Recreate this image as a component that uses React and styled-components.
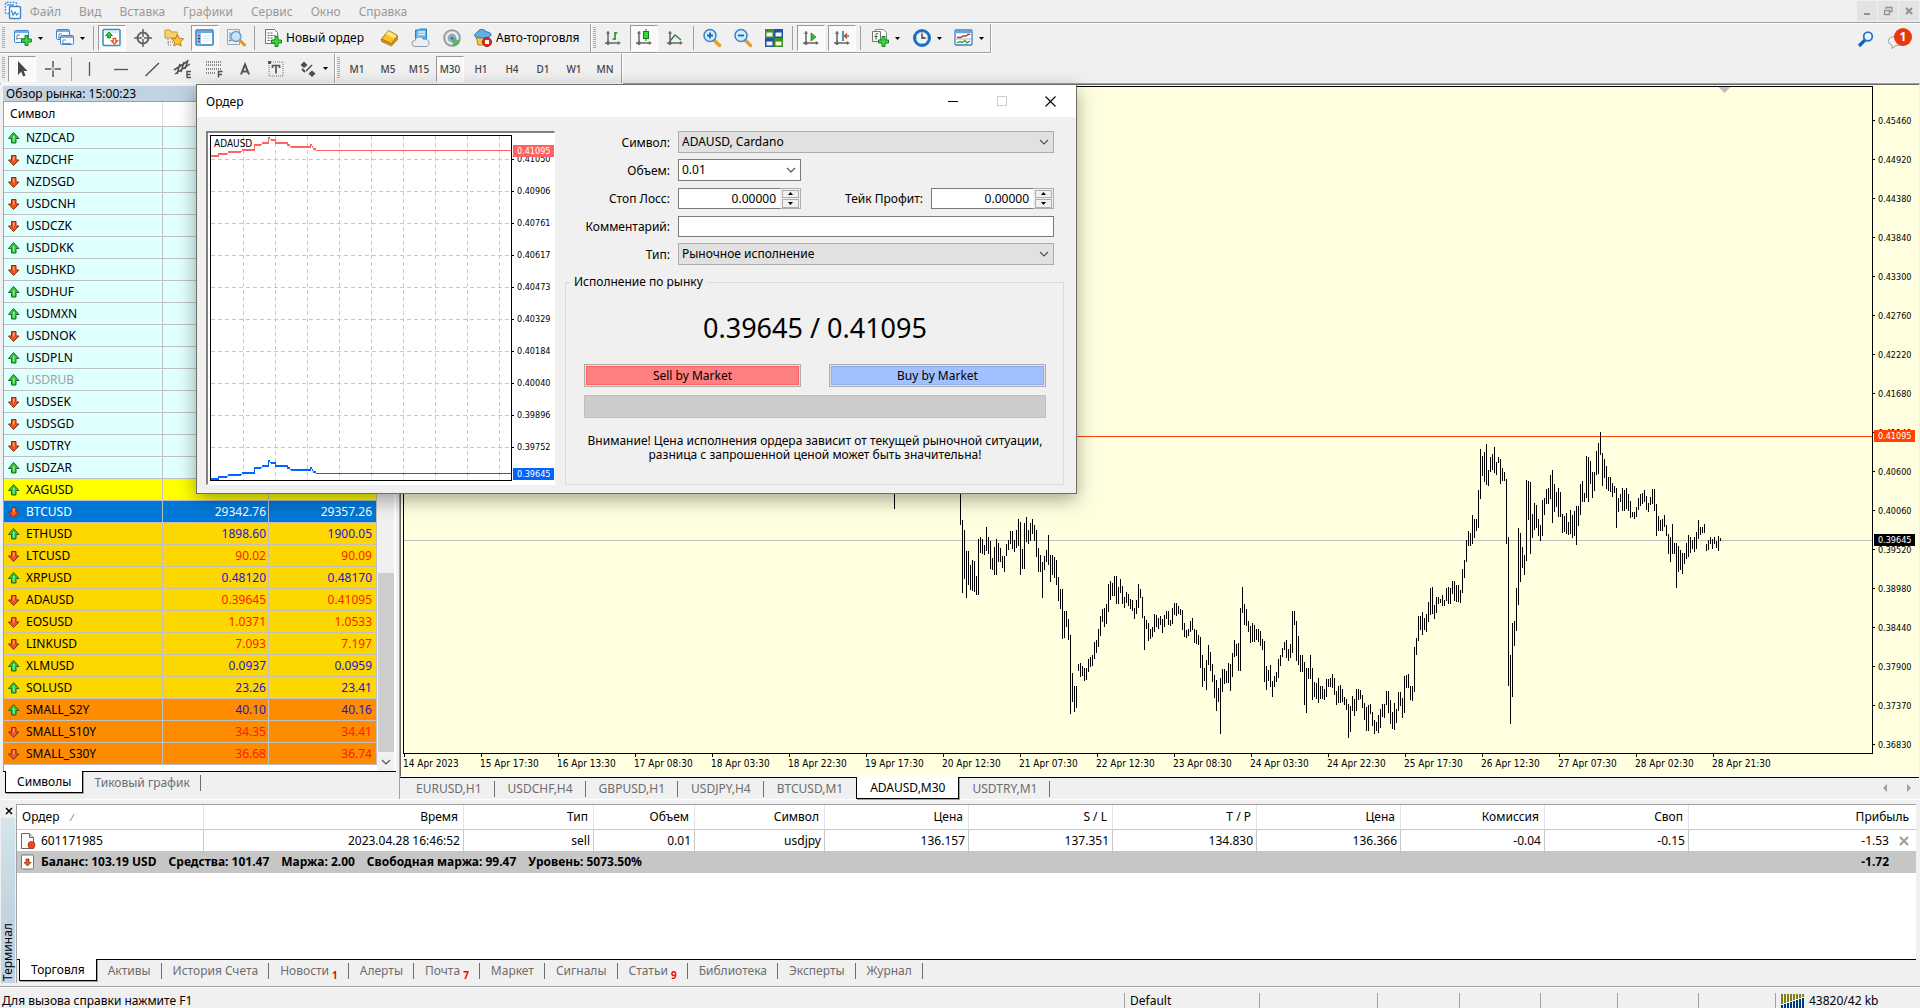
import React from "react";
import styled, { createGlobalStyle } from "styled-components";

const UI = '"Noto Sans", "Open Sans", sans-serif';
const CONDENSED = '"DejaVu Sans Condensed", "DejaVu Sans", sans-serif';
const FACE = "#f0f0f0";
const LINE = "#a0a0a0";
const PAPER = "#ffffe0";

const Global = createGlobalStyle`
  *, *::before, *::after { box-sizing: border-box; }
  body { margin: 0; background: ${FACE}; font-family: ${UI}; font-size: 12px; line-height: 16px; color: #000; }
  button, input, select { font: inherit; color: inherit; }
  button { background: none; border: 0; padding: 0; }
  svg { display: block; flex: none; }
`;

/* ---------- data ---------- */

const MENU = ["Файл", "Вид", "Вставка", "Графики", "Сервис", "Окно", "Справка"];
const PERIODS = ["M1", "M5", "M15", "M30", "H1", "H4", "D1", "W1", "MN"];

const CYAN = "#e0ffff";
const GOLD = "#ffd700";
const ORANGE = "#ff8c00";
const SYMBOLS = [
  ["NZDCAD", 1, CYAN], ["NZDCHF", 0, CYAN], ["NZDSGD", 0, CYAN], ["USDCNH", 0, CYAN],
  ["USDCZK", 0, CYAN], ["USDDKK", 1, CYAN], ["USDHKD", 0, CYAN], ["USDHUF", 1, CYAN],
  ["USDMXN", 1, CYAN], ["USDNOK", 0, CYAN], ["USDPLN", 1, CYAN], ["USDRUB", 1, CYAN],
  ["USDSEK", 0, CYAN], ["USDSGD", 0, CYAN], ["USDTRY", 0, CYAN], ["USDZAR", 1, CYAN],
  ["XAGUSD", 1, "#ffff00", "25.044", "25.082"],
  ["BTCUSD", 0, "#0078d7", "29342.76", "29357.26"],
  ["ETHUSD", 1, GOLD, "1898.60", "1900.05"],
  ["LTCUSD", 0, GOLD, "90.02", "90.09"],
  ["XRPUSD", 1, GOLD, "0.48120", "0.48170"],
  ["ADAUSD", 0, GOLD, "0.39645", "0.41095"],
  ["EOSUSD", 0, GOLD, "1.0371", "1.0533"],
  ["LINKUSD", 0, GOLD, "7.093", "7.197"],
  ["XLMUSD", 1, GOLD, "0.0937", "0.0959"],
  ["SOLUSD", 1, GOLD, "23.26", "23.41"],
  ["SMALL_S2Y", 1, ORANGE, "40.10", "40.16"],
  ["SMALL_S10Y", 0, ORANGE, "34.35", "34.41"],
  ["SMALL_S30Y", 0, ORANGE, "36.68", "36.74"],
];

const CHART_TABS = ["EURUSD,H1", "USDCHF,H4", "GBPUSD,H1", "USDJPY,H4", "BTCUSD,M1", "ADAUSD,M30", "USDTRY,M1"];
const TERMINAL_TABS = [
  ["Торговля"], ["Активы"], ["История Счета"], ["Новости", 1], ["Алерты"], ["Почта", 7],
  ["Маркет"], ["Сигналы"], ["Статьи", 9], ["Библиотека"], ["Эксперты"], ["Журнал"],
];
const PRICES = [
  "0.45460", "0.44920", "0.44380", "0.43840", "0.43300", "0.42760", "0.42220", "0.41680", "0.41140",
  "0.40600", "0.40060", "0.39520", "0.38980", "0.38440", "0.37900", "0.37370", "0.36830",
];
const TIMES = [
  "14 Apr 2023", "15 Apr 17:30", "16 Apr 13:30", "17 Apr 08:30", "18 Apr 03:30", "18 Apr 22:30",
  "19 Apr 17:30", "20 Apr 12:30", "21 Apr 07:30", "22 Apr 12:30", "23 Apr 08:30", "24 Apr 03:30",
  "24 Apr 22:30", "25 Apr 17:30", "26 Apr 12:30", "27 Apr 07:30", "28 Apr 02:30", "28 Apr 21:30",
];
const TICK_PRICES = [
  "0.41050", "0.40906", "0.40761", "0.40617", "0.40473", "0.40329", "0.40184", "0.40040", "0.39896", "0.39752",
];
const COLUMNS = [
  ["Ордер", 187], ["Время", 260], ["Тип", 130], ["Объем", 101], ["Символ", 130], ["Цена", 144],
  ["S / L", 144], ["T / P", 144], ["Цена", 144], ["Комиссия", 144], ["Своп", 144], ["Прибыль"],
];
const DEAL = ["601171985", "2023.04.28 16:46:52", "sell", "0.01", "usdjpy", "136.157", "137.351", "134.830", "136.366", "-0.04", "-0.15", "-1.53"];

/* High/low pairs, one bar every two pixels, in thirds of a pixel. */
const BARS_A = [
  210,315, 300,518, 330,477, 393,534, 393,494, 435,510, 420,512, 423,516, 468,524, 357,524, 351,398, 357,402,
  375,405, 321,393, 351,402, 363,447, 414,450, 381,464, 357,464, 369,426, 384,426, 408,444, 408,456, 372,408,
  360,390, 333,372, 333,387, 360,396, 330,384, 297,378, 306,464, 387,447, 309,447, 291,366, 330,372, 309,363,
  297,342, 315,363, 330,410, 384,456, 405,456, 426,534, 408,450, 390,426, 345,435, 405,486, 405,464, 411,474,
  420,494, 471,542, 507,567, 507,657, 573,654, 573,621, 597,660, 645,882, 759,846, 798,876, 798,864, 732,752,
  729,770, 738,768, 744,782, 744,780, 717,756, 711,741, 705,738, 666,717, 660,699, 627,681, 588,648, 567,606,
  564,621, 552,612, 492,576, 483,540, 489,528, 468,528, 468,552, 501,552, 477,519, 498,552, 531,564, 516,549,
  522,558, 537,567, 540,573, 564,597, 540,582, 492,564, 507,534, 531,594, 588,690, 600,627, 609,663, 627,657,
  621,651, 582,636, 585,621, 594,627, 588,615, 597,639, 585,621, 573,597, 573,615, 600,618, 564,612, 549,585,
  549,588, 558,582, 567,585, 570,630, 609,651, 630,654, 627,648, 603,636, 594,630, 627,669, 630,672, 645,675,
  651,744, 705,801, 744,783, 720,810, 675,735, 696,753, 732,786, 765,834, 780,873, 804,846, 774,942, 747,816,
  747,792, 753,788, 729,789, 732,813, 699,771, 660,711, 672,708, 669,753, 564,753, 501,579, 552,615, 567,618,
  603,636, 618,669, 609,666, 615,666, 627,660, 627,666, 633,678, 657,690, 663,786, 738,810, 750,783, 735,801,
  783,831, 768,801, 756,786, 717,774, 705,738, 684,711, 666,690, 660,714, 687,723, 672,714, 573,699, 573,615,
  603,723, 648,735, 705,756, 705,756, 726,855, 744,879, 744,777, 705,777, 744,840, 786,831, 789,837, 774,849,
  798,837, 798,837, 807,840, 777,831, 777,801, 774,801, 762,804, 774,825, 813,855, 798,849, 795,849, 807,846,
  831,855, 837,870, 852,954, 858,936, 828,873, 837,888, 807,873, 807,840, 810,837, 825,864, 849,900, 861,933,
  855,933, 852,882, 876,918, 900,942, 906,933, 885,939, 867,924, 852,891, 852,894, 813,855, 813,879, 840,912,
  876,927, 849,930, 867,909, 816,873, 816,858, 834,894, 768,879, 765,804, 762,804, 798,840, 798,843, 681,816,
  654,705, 588,663, 588,630, 576,645, 594,630, 582,636, 546,606, 504,585, 501,582, 555,597, 531,579, 531,552,
];
const BARS_B = [
  597,609, 585,618, 600,618, 564,603, 561,612, 564,612, 543,582, 543,603, 555,606, 555,606, 570,609, 507,579,
  480,534, 420,486, 393,438, 399,438, 345,432, 357,414, 357,393, 270,384, 147,297, 168,228, 156,246, 132,255,
  210,258, 171,216, 162,210, 141,219, 186,225, 171,189, 177,252, 204,243, 216,243, 237,432, 411,858, 765,972,
  669,891, 663,738, 564,693, 384,615, 399,546, 441,504, 465,525, 240,483, 243,360, 246,462, 342,414, 309,390,
  315,384, 357,408, 375,423, 300,408, 294,345, 267,312, 264,312, 225,297, 210,369, 252,336, 276,321, 264,351,
  276,351, 342,399, 348,396, 339,402, 366,405, 330,402, 345,414, 333,408, 318,435, 318,378, 252,345, 243,306,
  279,306, 168,294, 171,306, 183,252, 216,294, 216,273, 153,225, 129,222, 96,165, 159,258, 177,234, 198,267,
  231,273, 231,276, 249,291, 258,279, 264,384, 294,336, 282,306, 264,333, 270,333, 264,327, 282,333, 303,354,
  336,351, 336,357, 321,351, 294,330, 282,318, 279,312, 270,306, 288,330, 309,336, 291,315, 267,312, 267,333,
  312,408, 348,393, 360,393, 357,393, 345,381, 375,408, 402,462, 411,486, 372,462, 429,462, 429,564, 438,516,
  450,510, 459,522, 459,492, 429,477, 405,471, 411,459, 420,447, 411,456, 396,447, 360,417, 381,405, 381,399,
  372,399, 432,453, 420,450, 411,432, 417,447, 411,432, 423,444, 408,453, 414,423,
];
const barsPath = (list, x0, y0) => {
  let d = "";
  for (let i = 0; i < list.length; i += 2) {
    d += `M${x0 + i} ${y0 + Math.floor(list[i] / 3)}V${y0 + Math.ceil(list[i + 1] / 3)}`;
  }
  return d;
};

/* Tick chart: [length, level] runs; the quote flickers by a pixel or two inside a run. */
const RUNS = [[8, 19], [9, 17], [14, 15], [13, 13], [7, 8], [7, 6], [2, 1], [5, 3], [12, 6], [3, 8], [20, 10], [2, 8], [4, 12]];
const tickPath = (shift) => {
  const pts = [];
  let x = 0;
  RUNS.forEach(([n, y]) => {
    for (let i = 0; i < n; i += 1) {
      pts.push(`${x},${y + shift + (x % 2) * 2}`);
      x += 1;
    }
  });
  pts.push(`${x},${shift + 14}`, `300,${shift + 14}`);
  return pts.join(" ");
};

/* ---------- icons ---------- */

const Ico = ({ children, s = 20 }) => (
  <svg width={s} height={s} viewBox={`0 0 ${s} ${s}`} aria-hidden="true">{children}</svg>
);
const Plus = ({ x = 9, y = 9 }) => (
  <path transform={`translate(${x} ${y})`} d="M4 0.5h3v3.500h3.500v3h-3.500v3.500h-3v-3.500h-3.500v-3h3.500z" fill="#3fd63f" stroke="#12841a" strokeWidth="1" />
);
const Axes = () => (
  <g stroke="#666" strokeWidth="1.500" fill="#666">
    <path d="M5 4v13M2 15h14" fill="none" />
    <path d="M3.500 5.500L5 3l1.500 2.500zM15 13.500L17.500 15L15 16.500z" strokeWidth="0.500" />
    <circle cx="5" cy="15" r="1" />
  </g>
);
const Win = ({ x, y, w = 14, h = 12 }) => (
  <g transform={`translate(${x} ${y})`}>
    <rect x="0.500" y="0.500" width={w} height={h} rx="1" fill="#f4faff" stroke="#3d87c9" />
    <path d={`M1 2h${w - 1}`} stroke="#6cb0ea" strokeWidth="2" />
    <path d={`M3 5v5M2 8.500h${w - 4}M3 5h3`} stroke="#7a8fa3" fill="none" />
  </g>
);

const icons = {
  app: (
    <Ico>
      <rect x="1.500" y="1.500" width="11" height="11" rx="1" fill="#fff" stroke="#4a97de" strokeWidth="1.500" strokeDasharray="2 1" />
      <rect x="5.500" y="5.500" width="11" height="12" rx="1" fill="#fff" stroke="#3b8bd8" strokeWidth="1.500" />
      <path d="M7.500 9l1.500 5 2-3 1.500 3 2-2" fill="none" stroke="#3b8bd8" strokeWidth="1.200" />
      <path d="M3 4h7" stroke="#4a97de" strokeWidth="1.500" />
    </Ico>
  ),
  newChart: <Ico><Win x="1" y="2" /><Plus x={8} y={7} /></Ico>,
  profiles: <Ico><Win x="1" y="1" w={13} h={10} /><Win x="5" y="7" w={13} h={9} /></Ico>,
  market: (
    <Ico>
      <rect x="1" y="1.500" width="17" height="16" rx="1" fill="#fff" stroke="#2f8fc4" strokeWidth="1.500" />
      <path d="M3 4h13" stroke="#a9d4ee" strokeWidth="1" />
      <path d="M7 4l3.500 3.500h-2v2.500h-3V7.500h-2z" fill="#35c13c" stroke="#157d1c" strokeWidth="0.800" />
      <path d="M12.500 16l-3-3h1.700v-2.500h2.600V13h1.700z" fill="#fff" stroke="#e8571b" strokeWidth="1.300" />
    </Ico>
  ),
  cross: (
    <Ico>
      <circle cx="10" cy="10" r="5.500" fill="none" stroke="#606060" strokeWidth="2" />
      <path d="M10 1v8M10 11v8M1 10h8M11 10h8" stroke="#606060" strokeWidth="1.500" />
    </Ico>
  ),
  favorites: (
    <Ico>
      <path d="M1 2h5l1 2h6v6H1z" fill="#f7d26a" stroke="#c99b2c" />
      <path d="M4 11v6M4 14h5M4 17h3" stroke="#777" strokeDasharray="1 1" />
      <path d="M13.500 6.500l1.800 3.900 4.200.5-3.100 2.900.8 4.200-3.700-2-3.700 2 .8-4.200-3.100-2.900 4.200-.5z" fill="#fdc63a" stroke="#b97a14" />
    </Ico>
  ),
  navigator: (
    <Ico>
      <rect x="1" y="2" width="17" height="15" rx="1" fill="#fff" stroke="#2b79c2" strokeWidth="1.500" />
      <path d="M2 4h15" stroke="#2f8fe0" strokeWidth="1.500" />
      <path d="M2 5h4v11.500H2z" fill="#8cc0ee" />
      <path d="M3 7.500h2M3 13.500h2" stroke="#d23" strokeWidth="1.500" /><path d="M3 10.500h2" stroke="#333" strokeWidth="1.500" />
      <path d="M8 8h8M8 10.500h8M8 13h8" stroke="#d6e6f2" />
    </Ico>
  ),
  tester: (
    <Ico>
      <path d="M1.500 1.500h12v15h-12z" fill="#eef3f8" stroke="#9aa7b3" />
      <path d="M4 4v10M2.500 12.500h10M4 7l3-3" stroke="#8a97a5" fill="none" />
      <circle cx="10" cy="8.500" r="5" fill="#bfe1fb" fillOpacity="0.850" stroke="#6b9dc8" strokeWidth="1.300" />
      <path d="M14 12.500l4.500 4.500" stroke="#d99a1e" strokeWidth="3" strokeLinecap="round" />
    </Ico>
  ),
  order: (
    <Ico>
      <path d="M2.500 1.500h9l3 3v11h-12z" fill="#fafafa" stroke="#777" />
      <path d="M4.500 5h6M4.500 7.500h8M4.500 10h5M4.500 12.500h4" stroke="#666" strokeDasharray="2 1" />
      <Plus x={8} y={8} />
    </Ico>
  ),
  gold: (
    <Ico>
      <path d="M1.500 11L8.500 2.500l9 5-6 8.500z" fill="#f8c02c" stroke="#b47708" />
      <path d="M8.500 3l8.500 5-3 2.500-8-4.500z" fill="#fde38a" />
      <path d="M1.500 11l10 4.500 6-7.500v3.500l-6 6.500-10-4.500z" fill="#d8921a" stroke="#a76c08" strokeWidth="0.700" />
    </Ico>
  ),
  cloud: (
    <Ico>
      <path d="M4.500 2h3l1-1h7v10h-11z" fill="#5db4f2" stroke="#2b7fc4" />
      <path d="M7 4h7M7 6.500h7" stroke="#e2f3ff" strokeWidth="1.500" />
      <path d="M4 18.500a3 3 0 010-6 4.500 4.500 0 018.500-1 3.600 3.600 0 013.500 7z" fill="#e9eff5" stroke="#8e9db0" />
    </Ico>
  ),
  signal: (
    <Ico>
      <circle cx="10" cy="10" r="8" fill="#c4cacf" stroke="#8f989f" strokeWidth="1.500" />
      <circle cx="10" cy="10" r="5.500" fill="none" stroke="#eef1f4" strokeWidth="1.500" />
      <circle cx="10" cy="10" r="3.500" fill="#8fb8d2" stroke="#8f989f" />
      <path d="M10 10l1 8.500c4-.4 6.500-3 7-6z" fill="#49b14d" fillOpacity="0.850" />
      <circle cx="10" cy="10" r="1.500" fill="#2c6fa6" />
    </Ico>
  ),
  auto: (
    <Ico>
      <path d="M3 8l2 9h8l3-9z" fill="#f6c544" stroke="#b88413" />
      <path d="M1.500 7.500c0-2 2-2 3-3.500s2-3 5-2.500 3 2 5 2.500 3.500 1 3.500 3-4 3-8 3-8.500-.5-8.500-2.500z" fill="#61aee4" stroke="#2d74ad" />
      <circle cx="14" cy="14" r="4.500" fill="#e5291c" stroke="#a8160c" />
      <rect x="12" y="12" width="4" height="4" fill="#fff" />
    </Ico>
  ),
  bars: <Ico><Axes /><path d="M12 4v8M12 5h2.500M9.500 11H12" stroke="#2a9432" strokeWidth="1.700" fill="none" /></Ico>,
  candles: <Ico><Axes /><path d="M12 1v12" stroke="#157d1c" /><rect x="9.500" y="3.500" width="5" height="7" fill="#2fd83a" stroke="#157d1c" /></Ico>,
  line: <Ico><Axes /><path d="M5 13l5-6 6 5" stroke="#3b7a42" strokeWidth="1.400" fill="none" /></Ico>,
  zoomIn: (
    <Ico>
      <path d="M12 12l5.500 5.500" stroke="#dfa32a" strokeWidth="3.500" strokeLinecap="round" />
      <circle cx="8" cy="7.500" r="6" fill="#d4ecfd" stroke="#3b83c4" strokeWidth="1.500" />
      <path d="M8 4.500v6M5 7.500h6" stroke="#1f67ad" strokeWidth="1.800" />
    </Ico>
  ),
  zoomOut: (
    <Ico>
      <path d="M12 12l5.500 5.500" stroke="#dfa32a" strokeWidth="3.500" strokeLinecap="round" />
      <circle cx="8" cy="7.500" r="6" fill="#d4ecfd" stroke="#3b83c4" strokeWidth="1.500" />
      <path d="M5 7.500h6" stroke="#1f67ad" strokeWidth="1.800" />
    </Ico>
  ),
  tile: (
    <Ico>
      <path d="M1 1h9v9H1z" fill="#3f8f1f" /><path d="M10 1h9v9h-9z" fill="#1f52a8" />
      <path d="M1 10h9v9H1z" fill="#1f52a8" /><path d="M10 10h9v9h-9z" fill="#3f8f1f" />
      <path d="M2.500 4.500h6v4h-6zM11.500 4.500h6v4h-6zM2.500 13.500h6v4h-6zM11.500 13.500h6v4h-6z" fill="#eef7e8" />
    </Ico>
  ),
  scroll: <Ico><Axes /><path d="M10 5l5 4-5 4z" fill="#35b53d" stroke="#157d1c" strokeWidth="0.700" /></Ico>,
  shift: <Ico><Axes /><path d="M11 3v10" stroke="#1f67ad" strokeWidth="1.500" /><path d="M17 8h-4.500M15 5.500L12.500 8l2.500 2.500" stroke="#c0501a" strokeWidth="1.500" fill="none" /></Ico>,
  indicators: (
    <Ico>
      <path d="M5.500 1.500h8l3 3v9h-11z" fill="#fff" stroke="#888" />
      <path d="M2.500 3.500h8v10h-8z" fill="#f4f4f4" stroke="#777" />
      <path d="M8 5.500c-2-.5-2 1-2 2v4M4.500 8.500h3" stroke="#555" fill="none" />
      <Plus x={8} y={8} />
    </Ico>
  ),
  clock: (
    <Ico>
      <circle cx="10" cy="10" r="7.500" fill="#e9f4fd" stroke="#1f6fbf" strokeWidth="3" />
      <path d="M10 5.500V10h3.500" stroke="#333" strokeWidth="1.300" fill="none" />
      <path d="M10 4v1M10 15v1M4 10h1M15 10h1" stroke="#789" />
    </Ico>
  ),
  template: (
    <Ico>
      <rect x="1" y="2" width="17" height="15" rx="1" fill="#fff" stroke="#3f7fbf" strokeWidth="1.300" />
      <path d="M2 4h15" stroke="#5ea6e6" strokeWidth="2.500" />
      <path d="M3 9.500h4l2-1.500h3l2-1.500h2" stroke="#b03a10" strokeWidth="1.300" fill="none" />
      <path d="M2 11h15" stroke="#9cb6cc" />
      <path d="M3 15l3-1.500 2 1 3-2 2 2.500 3-2" stroke="#2c8e34" strokeWidth="1.300" fill="none" />
    </Ico>
  ),
  cursor: <Ico><path d="M6 2v14l3.200-3.200 2 4.700 2.400-1-2-4.600H15.500z" fill="#484848" /></Ico>,
  plusThin: <Ico><path d="M10 2v6.500M10 11.500V18M2 10h6.500M11.500 10H18" stroke="#555" strokeWidth="1.500" /><path d="M9.500 9.500h1v1h-1z" fill="#555" /></Ico>,
  vline: <Ico><path d="M9.500 3v14" stroke="#555" strokeWidth="1.300" /></Ico>,
  hline: <Ico><path d="M3 10.500h14" stroke="#555" strokeWidth="1.300" /></Ico>,
  trend: <Ico><path d="M3.500 17L17 4" stroke="#555" strokeWidth="1.500" /></Ico>,
  channel: (
    <Ico>
      <path d="M1 11L15 2M2 15L17 5M4 15l3-10M8 13l3-10M12 10l3-9" stroke="#505050" strokeWidth="1.500" />
      <path d="M18 12.500h-4v6h4M14 15.500h3.500" stroke="#505050" strokeWidth="1.400" fill="none" />
    </Ico>
  ),
  fibo: (
    <Ico>
      <path d="M2 3h16M2 6h16M2 10h16M2 14h10" stroke="#666" strokeDasharray="1 1" strokeWidth="1.300" />
      <path d="M14.500 18.500v-6h4M14.500 15.500h3.500" stroke="#505050" strokeWidth="1.400" fill="none" />
    </Ico>
  ),
  textA: <Ico><path d="M6 15.500L10 5.500l4 10M7.500 12.500h5" stroke="#555" strokeWidth="2" fill="none" /></Ico>,
  label: (
    <Ico>
      <rect x="3" y="3" width="14" height="14" fill="none" stroke="#777" strokeDasharray="1 1" />
      <path d="M2 2h3v3H2z" fill="#555" /><path d="M6 6.500h8M10 6v8.500M6.500 6v3M13.500 6v3" stroke="#555" strokeWidth="1.700" />
    </Ico>
  ),
  arrows: (
    <Ico>
      <path d="M6 2.500l3.500 3.500-3.500 3-3.500-3zM14 18l-3.500-3.500 3.500-3 3.500 3z" fill="#4d4d4d" />
      <path d="M8 12l6-6" stroke="#4d4d4d" strokeWidth="1.500" /><path d="M4 10l3 3" stroke="#4d4d4d" strokeWidth="2" />
    </Ico>
  ),
  search: (
    <Ico>
      <path d="M9 11l-6 6" stroke="#1b5fb0" strokeWidth="3.200" />
      <circle cx="12" cy="7.500" r="4.300" fill="#eaf6ff" stroke="#2d73c4" strokeWidth="1.800" />
    </Ico>
  ),
  up: (
    <Ico s={14}>
      <path d="M6.500 1.500L12 7.500H9v4.500H4.500V7.500H1.500z" fill="#37c13e" stroke="#1c6f22" /><path d="M6 5h1.500v5.500H6z" fill="#8df08f" />
    </Ico>
  ),
  down: (
    <Ico s={14}>
      <path d="M6.500 12.500L1.500 7H4.500V2.500h4.500V7h3z" fill="#f0561c" stroke="#8c2f10" /><path d="M6 3.500h1.500v4H6z" fill="#ffa27a" />
    </Ico>
  ),
  deal: (
    <Ico s={16}>
      <path d="M1.500 .5h8l4 4v11h-12z" fill="#fbfbfb" stroke="#666" /><path d="M9.500.5v4h4" fill="#ddd" stroke="#666" />
      <circle cx="11.500" cy="12" r="3.500" fill="#ea4a17" stroke="#a32c08" strokeWidth="0.700" />
    </Ico>
  ),
  balance: (
    <Ico s={16}>
      <rect x="1.500" y="1" width="12" height="14" rx="1" fill="#fff" stroke="#777" />
      <path d="M7.500 12L4 8.500h2V5h3v3.500h2z" fill="#f0561c" stroke="#8c2f10" strokeWidth="0.800" />
    </Ico>
  ),
  traffic: (
    <svg width="24" height="15" viewBox="0 0 24 15" aria-hidden="true" shapeRendering="crispEdges">
      {[0, 1, 2, 3, 4, 5, 6, 7].map((i) => (
        <g key={i}>
          <rect x={i * 3} y="0" width="2" height={10 - i} fill="#808018" />
          <rect x={i * 3} y={11 - i} width="2" height={4 + i} fill="#003c80" />
        </g>
      ))}
    </svg>
  ),
};

const Chevron = () => (
  <svg width="10" height="6" viewBox="0 0 10 6" aria-hidden="true"><path d="M1 1l4 4 4-4" fill="none" stroke="#555" strokeWidth="1.200" /></svg>
);
const Caret = () => (
  <svg width="5" height="3" viewBox="0 0 5 3" aria-hidden="true"><path d="M0 0h5L2.500 3z" fill="#000" /></svg>
);

/* ---------- frame ---------- */

const Shell = styled.div`
  position: relative;
  display: flex;
  flex-direction: column;
  min-width: 1100px;
  min-height: 100vh;
`;

const MenuBar = styled.nav`
  display: flex;
  align-items: center;
  height: 23px;
  margin-bottom: 1px;
  padding: 0 1px 0 4px;
  border-bottom: 1px solid ${LINE};
  box-shadow: 0 1px #fff;
`;
const MenuList = styled.div`
  display: flex;
  flex: 1;
  gap: 18px;
  padding: 2px 0 0 6px;
`;
const MenuItem = styled.button`
  color: #999;
`;
const MdiButton = styled.button`
  display: grid;
  place-items: center;
  width: 20px;
  height: 20px;
  margin-left: 1px;
  background: #e3e3e3;
`;

const ToolRow = styled.div`
  display: flex;
  height: 30px;
  border-bottom: ${(p) => (p.$ruled ? `1px solid ${LINE}` : "0")};
`;
const Band = styled.div`
  display: flex;
  align-items: center;
  gap: 3px;
  height: 29px;
  padding: 0 2px 0 8px;
  border-right: 1px solid ${LINE};
  border-bottom: ${(p) => (p.$ruled ? `1px solid ${LINE}` : "0")};
  background: repeating-linear-gradient(#aaa 0 1px, transparent 1px 2px) 2px 3px / 3px 22px no-repeat;
  box-shadow: 1px 1px #fff;
`;
const Tool = styled.button`
  display: flex;
  align-items: center;
  justify-content: center;
  gap: 4px;
  min-width: 28px;
  height: 26px;
  padding: 0;
  border: 1px solid transparent;
  border-color: ${(p) => (p.$on ? "#999 #fff #fff #999" : "transparent")};
  background: ${(p) => (p.$on ? "#f9f9f9" : "none")};
`;
const TextTool = styled(Tool)`
  justify-content: flex-start;
  gap: 3px;
  padding: 0 8px 0 3px;
`;
const DropTool = styled(Tool)`
  width: 39px;
  gap: 5px;
`;
const Period = styled(Tool)`
  font-size: 10px;
  font-weight: 500;
  color: #444;
`;
const Divider = styled.i`
  width: 1px;
  height: 24px;
  margin: 0 1px;
  background: ${LINE};
`;
const Extras = styled.div`
  display: flex;
  flex: 1;
  justify-content: flex-end;
  align-items: center;
  gap: 6px;
  padding-right: 6px;
`;
const Bubble = styled(Tool)`
  position: relative;
  width: 28px;
`;
const Count = styled.span`
  position: absolute;
  top: 1px;
  right: 1px;
  width: 18px;
  height: 18px;
  border-radius: 9px;
  background: #e8380d;
  color: #fff;
  font-weight: 700;
  line-height: 18px;
  text-align: center;
`;

const Workspace = styled.main`
  display: flex;
`;

/* ---------- tabs ---------- */

const TabBar = styled.div`
  display: flex;
  align-items: flex-start;
  height: ${(p) => p.$height};
  padding-left: ${(p) => p.$inset || "2px"};
  border-top: 1px solid #000;
`;
const Tab = styled.button`
  position: relative;
  display: flex;
  height: ${(p) => (p.$on ? "22px" : "21px")};
  margin-top: ${(p) => (p.$on ? "-1px" : "0")};
  padding: ${(p) => (p.$on ? "1px" : "0")} ${(p) => p.$pad || "11px"} 0;
  align-items: center;
  color: ${(p) => (p.$on ? "#000" : "#6d6d6d")};
  background: ${(p) => (p.$on ? "#fff" : "none")};
  border-style: solid;
  border-color: #000;
  border-width: ${(p) => (p.$on ? "0 1px 1px 1px" : "0")};
  box-shadow: ${(p) => (p.$on ? `1px 1px ${LINE}` : "none")};
  &::after {
    content: "";
    position: absolute;
    right: 0;
    top: 3px;
    width: 1px;
    height: 16px;
    background: ${(p) => (p.$on || p.$last ? "transparent" : "#6d6d6d")};
  }
`;
const TabCount = styled.sup`
  align-self: flex-end;
  margin-left: 3px;
  color: #f00;
  font-size: 10px;
  font-weight: 700;
  line-height: 12px;
`;

/* ---------- market watch ---------- */

const Market = styled.section`
  flex: none;
  width: 400px;
  padding: 2px 3px 0 3px;
  border-right: 1px solid ${LINE};
  border-bottom: 1px solid ${LINE};
`;
const PanelTitle = styled.h2`
  margin: 0;
  height: 15px;
  padding-left: 3px;
  background: #c3d2e0;
  font-size: 12px;
  font-weight: 400;
  line-height: 15px;
`;
const WatchFrame = styled.div`
  display: flex;
  padding-bottom: 6px;
  border-top: 1px solid ${LINE};
  border-left: 1px solid ${LINE};
  background: #fff;
`;
const WatchTable = styled.table`
  width: 373px;
  table-layout: fixed;
  border-collapse: separate;
  border-spacing: 0;
  th, td { padding: 0 2px 0 3px; border-right: 1px solid silver; border-bottom: 1px solid silver; }
  th { height: 25px; padding-left: 6px; font-weight: 400; text-align: left; border-right-color: #e0e0e0; }
  td { height: 22px; }
`;
const WatchRow = styled.tr`
  background: ${(p) => p.$fill};
  color: ${(p) => p.$ink};
  td:last-child { padding-right: 4px; }
`;
const SymbolCell = styled.div`
  display: flex;
  align-items: center;
  gap: 5px;
  color: ${(p) => p.$ink};
`;
const Quote = styled.td`
  text-align: right;
`;
const ScrollTrack = styled.div`
  display: flex;
  flex-direction: column;
  justify-content: flex-end;
  align-items: center;
  width: 17px;
  margin-bottom: -6px;
  background: ${FACE};
`;
const ScrollThumb = styled.div`
  width: 16px;
  height: 179px;
  background: #cdcdcd;
`;
const ScrollArrow = styled.button`
  display: grid;
  place-items: center;
  height: 19px;
`;

/* ---------- chart ---------- */

const ChartSide = styled.section`
  display: flex;
  flex: 1;
  flex-direction: column;
  min-width: 0;
  padding-right: 1px;
`;
const ChartWindow = styled.div`
  display: grid;
  flex: 1;
  grid-template-columns: 1fr 46px;
  grid-template-rows: 1fr 22px;
  padding: 1px 0 0 2px;
  border-top: 1px solid #696969;
  border-left: 1px solid #696969;
  border-bottom: 1px solid #fff;
  background: ${PAPER};
`;
const Plot = styled.div`
  min-width: 0;
  border: 1px solid #000;
  svg { width: 100%; height: 100%; }
`;
const PriceAxis = styled.div`
  position: relative;
  grid-row: 1 / 3;
  grid-column: 2;
  padding-top: 15px;
`;
const PriceMark = styled.div`
  display: flex;
  align-items: center;
  gap: 3px;
  height: ${(p) => p.$step};
  font-family: ${CONDENSED};
  font-size: 9px;
  &::before { content: ""; width: 2px; height: 1px; background: #000; }
`;
const PriceFlag = styled.div`
  position: absolute;
  left: 1px;
  top: ${(p) => p.$top};
  width: 41px;
  height: 12px;
  padding-left: 4px;
  background: ${(p) => p.$fill};
  color: #fff;
  font-family: ${CONDENSED};
  font-size: 9px;
  line-height: 12px;
`;
const TimeAxis = styled.div`
  display: flex;
  overflow: hidden;
`;
const TimeMark = styled.div`
  flex: 0 0 77px;
  height: 20px;
  font-family: ${CONDENSED};
  font-size: 10px;
  line-height: 14px;
  white-space: nowrap;
  &::before { content: ""; display: block; width: 1px; height: 3px; margin-left: 1px; background: #000; }
`;
const TabScroll = styled.div`
  display: flex;
  gap: 18px;
  margin-left: auto;
  padding: 6px 8px 0 0;
`;

/* ---------- terminal ---------- */

const Terminal = styled.section`
  display: flex;
  flex: 1;
  padding: 4px 4px 3px 0;
  border-top: 1px solid #fff;
  margin-top: -1px;
`;
const Strip = styled.div`
  display: flex;
  flex-direction: column;
  width: 16px;
  padding-left: 1px;
`;
const StripClose = styled.button`
  display: grid;
  place-items: center;
  height: 14px;
`;
const StripTitle = styled.h2`
  flex: 1;
  margin: 0;
  width: 14px;
  background: linear-gradient(to top, #d3e6ea, #c3d2e0 60%, #c0d4e4);
  writing-mode: vertical-rl;
  transform: rotate(180deg);
  padding-top: 2px;
  font-size: 12px;
  font-weight: 400;
  line-height: 14px;
`;
const Deals = styled.div`
  display: flex;
  flex: 1;
  flex-direction: column;
  min-width: 0;
  border-top: 1px solid ${LINE};
  border-left: 1px solid ${LINE};
`;
const DealsBody = styled.div`
  flex: 1;
  background: #fff;
`;
const DealsTable = styled.table`
  width: 100%;
  table-layout: fixed;
  border-collapse: separate;
  border-spacing: 0;
  th { height: 25px; padding: 0 5px; font-weight: 400; text-align: right; border-right: 1px solid #e4e4e4; border-bottom: 1px solid #c8c8c8; }
  td { height: 21px; padding: 0 3px; text-align: right; border-right: 1px solid #c8c8c8; }
  th:first-child { text-align: left; }
  tr > :last-child { border-right: 0; padding-right: 7px; }
`;
const Sort = styled.span`
  margin-left: 12px;
  font-size: 9px;
  color: #555;
`;
const WithIcon = styled.div`
  display: flex;
  align-items: center;
  gap: ${(p) => p.$gap || "5px"};
  justify-content: ${(p) => (p.$end ? "flex-end" : "flex-start")};
`;
const Summary = styled.tr`
  background: #c6c6c6;
  font-weight: 700;
  td { height: 22px; border: 0; }
  td:last-child { padding-right: 27px; }
`;
const Totals = styled.span`
  display: flex;
  gap: 12px;
  white-space: nowrap;
`;
const StatusBar = styled.footer`
  display: flex;
  align-items: center;
  height: 22px;
  padding: 7px 0 0 2px;
  border-top: 1px solid ${LINE};
  box-shadow: inset 0 1px #fff;
`;
const StatusCell = styled.div`
  display: flex;
  align-items: center;
  gap: 4px;
  flex: ${(p) => (p.$w ? `0 0 ${p.$w}` : "1")};
  height: 16px;
  padding-left: ${(p) => (p.$w ? "5px" : "0")};
  border-left: ${(p) => (p.$w ? `1px solid ${LINE}` : "0")};
  line-height: 16px;
`;

/* ---------- order dialog ---------- */

const Dialog = styled.form`
  position: absolute;
  left: 196px;
  top: 84px;
  width: 881px;
  border: 1px solid #6e6e64;
  background: ${FACE};
  box-shadow: 0 6px 18px rgba(0, 0, 0, 0.35);
`;
const TitleBar = styled.header`
  display: flex;
  align-items: center;
  height: 32px;
  background: #fff;
  padding: 0 1px 0 9px;
`;
const DialogTitle = styled.h1`
  flex: 1;
  margin: 0;
  padding-top: 2px;
  font-size: 12px;
  font-weight: 400;
`;
const WindowButton = styled.button`
  display: grid;
  place-items: center;
  width: 49px;
  height: 32px;
`;
const DialogBody = styled.div`
  display: grid;
  grid-template-columns: 349px 1fr;
  gap: 10px;
  padding: 14px 12px 8px 9px;
`;
const TickFrame = styled.div`
  display: grid;
  grid-template-columns: 302px 1fr;
  align-items: start;
  padding: 2px 0 3px 2px;
  border: 1px solid #fff;
  border-top: 2px solid #808080;
  border-left: 2px solid #808080;
  background: #fff;
`;
const TickPlot = styled.div`
  position: relative;
  height: 346px;
  border: 1px solid #000;
`;
const TickName = styled.span`
  position: absolute;
  left: 3px;
  top: 1px;
  font-family: ${CONDENSED};
  font-size: 10px;
  line-height: 14px;
`;
const TickAxis = styled.div`
  position: relative;
  padding-top: 8px;
`;
const Fields = styled.div`
  display: grid;
  grid-template-columns: 105px 123px 1fr 123px;
  grid-auto-rows: 22px;
  row-gap: 6px;
  column-gap: 8px;
  align-items: center;
  padding-right: 10px;
`;
const Label = styled.label`
  padding-top: 2px;
  text-align: right;
`;
const Picker = styled.div`
  position: relative;
  grid-column: ${(p) => (p.$full ? "2 / -1" : "auto")};
  svg { position: absolute; right: 5px; top: 8px; pointer-events: none; }
`;
const Select = styled.select`
  appearance: none;
  width: 100%;
  height: 22px;
  padding: 0 3px;
  border: 1px solid ${(p) => (p.$plain ? "#7a7a7a" : "#adadad")};
  border-radius: 0;
  background: ${(p) => (p.$plain ? "#fff" : "#e1e1e1")};
`;
const Entry = styled.input`
  grid-column: 2 / -1;
  min-width: 0;
  width: 100%;
  height: 21px;
  padding: 0 4px;
  border: 1px solid #7a7a7a;
  border-radius: 0;
  background: #fff;
`;
const Spinner = styled.div`
  display: grid;
  grid-template-columns: 1fr 19px;
  height: 21px;
  border: 1px solid #adadad;
  input { grid-column: 1; height: 21px; margin: -1px 0 0 -1px; border-right: 0; text-align: right; }
`;
const SpinButtons = styled.div`
  display: grid;
  grid-template-rows: 1fr 1fr;
  gap: 1px;
  padding: 1px;
`;
const Spin = styled.button`
  display: grid;
  place-items: center;
  border: 1px solid #adadad;
  background: ${FACE};
  svg { transform: ${(p) => (p.$up ? "rotate(180deg)" : "none")}; }
`;
const Execution = styled.fieldset`
  min-width: 0;
  margin: 8px 0 0;
  padding: 0 17px 22px 18px;
  border: 1px solid #dcdcdc;
  legend { margin-left: -13px; padding: 0 3px; line-height: 18px; }
`;
const BigPrice = styled.p`
  margin: 19px 0 18px;
  font-size: 27px;
  line-height: 36px;
  text-align: center;
`;
const Deal = styled.div`
  display: grid;
  grid-template-columns: 1fr 1fr;
  gap: 8px 28px;
`;
const DealButton = styled.button`
  height: 23px;
  border: 1px solid #adadad;
  background: ${(p) => p.$fill};
  box-shadow: inset 0 0 0 1px #e1e1e1, inset 0 0 0 2px ${(p) => p.$rim};
`;
const Gauge = styled.div`
  grid-column: 1 / -1;
  height: 23px;
  border: 1px solid #bfbfbf;
  background: #ccc;
`;
const Warning = styled.p`
  margin: 16px 0 0;
  line-height: 14px;
  text-align: center;
  white-space: nowrap;
`;
const Right = styled.div`
  min-width: 0;
`;

/* ---------- sections ---------- */

function Drop({ icon, label }) {
  return <DropTool type="button" aria-label={label}>{icon}<Caret /></DropTool>;
}

function Toolbars() {
  return (
    <>
      <ToolRow>
        <Band $ruled>
          <Drop icon={icons.newChart} label="Новый график" />
          <Drop icon={icons.profiles} label="Профили" />
          <Divider />
          <Tool type="button" $on aria-label="Обзор рынка">{icons.market}</Tool>
          <Tool type="button" aria-label="Окно данных">{icons.cross}</Tool>
          <Tool type="button" aria-label="Навигатор">{icons.favorites}</Tool>
          <Tool type="button" $on aria-label="Терминал">{icons.navigator}</Tool>
          <Tool type="button" aria-label="Тестер">{icons.tester}</Tool>
          <Divider />
          <TextTool type="button">{icons.order}Новый ордер</TextTool>
          <Tool type="button" aria-label="Редактор">{icons.gold}</Tool>
          <Tool type="button" aria-label="Хостинг">{icons.cloud}</Tool>
          <Tool type="button" aria-label="Сигналы">{icons.signal}</Tool>
          <TextTool type="button">{icons.auto}Авто-торговля</TextTool>
        </Band>
        <Band $ruled>
          <Tool type="button" aria-label="Бары">{icons.bars}</Tool>
          <Tool type="button" $on aria-label="Свечи">{icons.candles}</Tool>
          <Tool type="button" aria-label="Линия">{icons.line}</Tool>
          <Divider />
          <Tool type="button" aria-label="Увеличить">{icons.zoomIn}</Tool>
          <Tool type="button" aria-label="Уменьшить">{icons.zoomOut}</Tool>
          <Tool type="button" aria-label="Мозаика">{icons.tile}</Tool>
          <Divider />
          <Tool type="button" $on aria-label="Автопрокрутка">{icons.scroll}</Tool>
          <Tool type="button" $on aria-label="Сдвиг">{icons.shift}</Tool>
          <Divider />
          <Drop icon={icons.indicators} label="Индикаторы" />
          <Drop icon={icons.clock} label="Периоды" />
          <Drop icon={icons.template} label="Шаблоны" />
        </Band>
        <Extras>
          <Tool type="button" aria-label="Поиск">{icons.search}</Tool>
          <Bubble type="button" aria-label="Сообщения">
            <svg width="26" height="22" viewBox="0 0 26 22" aria-hidden="true">
              <path d="M8 8.500c-5 0-7 2.500-6.500 5s2 3 3.500 3.500v3.500l4-3c6 0 8-2 8-4.500s-3-4.500-9-4.500z" fill="#f2f2f2" stroke="#9a9a9a" />
            </svg>
            <Count>1</Count>
          </Bubble>
        </Extras>
      </ToolRow>
      <ToolRow $ruled>
        <Band>
          <Tool type="button" $on aria-label="Курсор">{icons.cursor}</Tool>
          <Tool type="button" aria-label="Перекрестие">{icons.plusThin}</Tool>
          <Divider />
          <Tool type="button" aria-label="Вертикальная линия">{icons.vline}</Tool>
          <Tool type="button" aria-label="Горизонтальная линия">{icons.hline}</Tool>
          <Tool type="button" aria-label="Трендовая линия">{icons.trend}</Tool>
          <Tool type="button" aria-label="Канал">{icons.channel}</Tool>
          <Tool type="button" aria-label="Фибоначчи">{icons.fibo}</Tool>
          <Tool type="button" aria-label="Текст">{icons.textA}</Tool>
          <Tool type="button" aria-label="Метка">{icons.label}</Tool>
          <Drop icon={icons.arrows} label="Стрелки" />
        </Band>
        <Band>
          {PERIODS.map((p) => <Period type="button" key={p} $on={p === "M30"}>{p}</Period>)}
        </Band>
      </ToolRow>
    </>
  );
}

function MarketWatch() {
  return (
    <Market>
      <PanelTitle>Обзор рынка: 15:00:23</PanelTitle>
      <WatchFrame>
        <WatchTable>
          <colgroup><col width="159" /><col width="106" /><col /></colgroup>
          <thead><tr><th>Символ</th><th /><th /></tr></thead>
          <tbody>
            {SYMBOLS.map(([name, up, fill, bid, ask]) => {
              const picked = name === "BTCUSD";
              const ink = picked ? "#fff" : up ? "#1f10d8" : "#ff1a00";
              return (
                <WatchRow key={name} $fill={fill} $ink={ink}>
                  <td>
                    <SymbolCell $ink={picked ? "#fff" : name === "USDRUB" ? "#a0a0a0" : "#000"}>
                      {up ? icons.up : icons.down}{name}
                    </SymbolCell>
                  </td>
                  <Quote>{bid}</Quote>
                  <Quote>{ask}</Quote>
                </WatchRow>
              );
            })}
          </tbody>
        </WatchTable>
        <ScrollTrack>
          <ScrollThumb />
          <ScrollArrow type="button" aria-label="Вниз"><Chevron /></ScrollArrow>
        </ScrollTrack>
      </WatchFrame>
      <TabBar $height="28px">
        <Tab type="button" $on>Символы</Tab>
        <Tab type="button">Тиковый график</Tab>
      </TabBar>
    </Market>
  );
}

function Chart() {
  return (
    <ChartSide>
      <ChartWindow>
        <Plot>
          <svg aria-hidden="true" shapeRendering="crispEdges">
            <line x1="0" x2="100%" y1="453.500" y2="453.500" stroke="#c0c0c0" />
            <line x1="0" x2="100%" y1="349.500" y2="349.500" stroke="#ff4500" />
            <path d="M1314 0h12l-6 6z" fill="#c0c0c0" />
            <path
              d={barsPath(BARS_A, 556.5, 333) + barsPath(BARS_B, 1036.5, 313) + "M430.500 400V407M490.500 400V422"}
              stroke="#000"
              fill="none"
            />
          </svg>
        </Plot>
        <PriceAxis>
          {PRICES.map((p) => <PriceMark key={p} $step="39px">{p}</PriceMark>)}
          <PriceFlag $top="344px" $fill="#ff4500">0.41095</PriceFlag>
          <PriceFlag $top="448px" $fill="#000">0.39645</PriceFlag>
        </PriceAxis>
        <TimeAxis>{TIMES.map((t) => <TimeMark key={t}>{t}</TimeMark>)}</TimeAxis>
      </ChartWindow>
      <TabBar $height="23px" $inset="3px">
        {CHART_TABS.map((t) => (
          <Tab type="button" key={t} $pad="13px" $on={t === "ADAUSD,M30"} $last={t === "BTCUSD,M1"}>{t}</Tab>
        ))}
        <TabScroll>
          <svg width="5" height="8" viewBox="0 0 5 8" aria-hidden="true"><path d="M4 0v8L0 4z" fill="#a0a0a0" /></svg>
          <svg width="5" height="8" viewBox="0 0 5 8" aria-hidden="true"><path d="M1 0v8l4-4z" fill="#a0a0a0" /></svg>
        </TabScroll>
      </TabBar>
    </ChartSide>
  );
}

function TerminalPanel() {
  return (
    <Terminal>
      <Strip>
        <StripClose type="button" aria-label="Закрыть терминал">
          <svg width="8" height="8" viewBox="0 0 8 8" aria-hidden="true"><path d="M1 1l6 6M7 1L1 7" stroke="#000" strokeWidth="1.500" /></svg>
        </StripClose>
        <StripTitle>Терминал</StripTitle>
      </Strip>
      <Deals>
        <DealsBody>
          <DealsTable>
            <colgroup>{COLUMNS.map(([n, w], i) => <col key={i} width={w} />)}</colgroup>
            <thead>
              <tr>{COLUMNS.map(([n], i) => <th key={i}>{n}{i === 0 && <Sort>⁄</Sort>}</th>)}</tr>
            </thead>
            <tbody>
              <tr>
                {DEAL.map((v, i) => (
                  <td key={i}>
                    {i === 0 && <WithIcon>{icons.deal}{v}</WithIcon>}
                    {i === 11 && (
                      <WithIcon $end $gap="10px">
                        {v}
                        <svg width="10" height="10" viewBox="0 0 10 10" aria-hidden="true"><path d="M1 1l8 8M9 1L1 9" stroke="#999" strokeWidth="2" /></svg>
                      </WithIcon>
                    )}
                    {i > 0 && i < 11 && v}
                  </td>
                ))}
              </tr>
              <Summary>
                <td colSpan={11}>
                  <WithIcon>
                    {icons.balance}
                    <Totals>
                      <span>Баланс: 103.19 USD</span>
                      <span>Средства: 101.47</span>
                      <span>Маржа: 2.00</span>
                      <span>Свободная маржа: 99.47</span>
                      <span>Уровень: 5073.50%</span>
                    </Totals>
                  </WithIcon>
                </td>
                <td>-1.72</td>
              </Summary>
            </tbody>
          </DealsTable>
        </DealsBody>
        <TabBar $height="24px" $inset="2px">
          {TERMINAL_TABS.map(([t, n]) => (
            <Tab type="button" key={t} $on={t === "Торговля"}>{t}{n && <TabCount>{n}</TabCount>}</Tab>
          ))}
        </TabBar>
      </Deals>
    </Terminal>
  );
}

function OrderDialog() {
  return (
    <Dialog>
      <TitleBar>
        <DialogTitle>Ордер</DialogTitle>
        <WindowButton type="button" aria-label="Свернуть">
          <svg width="10" height="10" viewBox="0 0 10 10" aria-hidden="true"><path d="M0 5.500h10" stroke="#000" /></svg>
        </WindowButton>
        <WindowButton type="button" aria-label="Развернуть">
          <svg width="10" height="10" viewBox="0 0 10 10" aria-hidden="true"><rect x="0.500" y="0.500" width="9" height="9" fill="none" stroke="#ccc" /></svg>
        </WindowButton>
        <WindowButton type="button" aria-label="Закрыть">
          <svg width="11" height="11" viewBox="0 0 11 11" aria-hidden="true"><path d="M.5.5l10 10M10.500.5l-10 10" stroke="#000" strokeWidth="1.100" /></svg>
        </WindowButton>
      </TitleBar>
      <DialogBody>
        <TickFrame>
          <TickPlot>
            <svg width="300" height="344" shapeRendering="crispEdges" aria-hidden="true">
              <g stroke="#c8c8c8" strokeDasharray="4 3">
                {[0, 1, 2, 3, 4, 5, 6, 7, 8].map((i) => <path key={i} d={`M${32.5 + i * 32} 0V344`} />)}
                {[0, 1, 2, 3, 4, 5, 6, 7, 8, 9].map((i) => <path key={i} d={`M0 ${23.5 + i * 32}H300`} />)}
              </g>
              <polyline points={tickPath(0)} fill="none" stroke="#ff6464" />
              <polyline points={tickPath(323)} fill="none" stroke="#0064ff" />
            </svg>
            <TickName>ADAUSD</TickName>
          </TickPlot>
          <TickAxis>
            {TICK_PRICES.map((p) => <PriceMark key={p} $step="32px">{p}</PriceMark>)}
            <PriceFlag $top="10px" $fill="#ff6464">0.41095</PriceFlag>
            <PriceFlag $top="333px" $fill="#0064ff">0.39645</PriceFlag>
          </TickAxis>
        </TickFrame>
        <Right>
          <Fields>
            <Label htmlFor="symbol">Символ:</Label>
            <Picker $full>
              <Select id="symbol" defaultValue="a"><option value="a">ADAUSD, Cardano</option></Select>
              <Chevron />
            </Picker>
            <Label htmlFor="volume">Объем:</Label>
            <Picker>
              <Select id="volume" $plain defaultValue="a"><option value="a">0.01</option></Select>
              <Chevron />
            </Picker>
            <i /><i />
            <Label htmlFor="stop">Стоп Лосс:</Label>
            <Spinner>
              <Entry id="stop" defaultValue="0.00000" />
              <SpinButtons>
                <Spin type="button" $up aria-label="Увеличить"><Caret /></Spin>
                <Spin type="button" aria-label="Уменьшить"><Caret /></Spin>
              </SpinButtons>
            </Spinner>
            <Label htmlFor="take">Тейк Профит:</Label>
            <Spinner>
              <Entry id="take" defaultValue="0.00000" />
              <SpinButtons>
                <Spin type="button" $up aria-label="Увеличить"><Caret /></Spin>
                <Spin type="button" aria-label="Уменьшить"><Caret /></Spin>
              </SpinButtons>
            </Spinner>
            <Label htmlFor="note">Комментарий:</Label>
            <Entry id="note" />
            <Label htmlFor="kind">Тип:</Label>
            <Picker $full>
              <Select id="kind" defaultValue="a"><option value="a">Рыночное исполнение</option></Select>
              <Chevron />
            </Picker>
          </Fields>
          <Execution>
            <legend>Исполнение по рынку</legend>
            <BigPrice>0.39645 / 0.41095</BigPrice>
            <Deal>
              <DealButton type="button" $fill="#ff8080" $rim="#ff6464">Sell by Market</DealButton>
              <DealButton type="button" $fill="#a0c0ff" $rim="#8caef0">Buy by Market</DealButton>
              <Gauge />
            </Deal>
            <Warning>
              Внимание! Цена исполнения ордера зависит от текущей рыночной ситуации,<br />
              разница с запрошенной ценой может быть значительна!
            </Warning>
          </Execution>
        </Right>
      </DialogBody>
    </Dialog>
  );
}

export default function App() {
  return (
    <Shell>
      <Global />
      <MenuBar>
        {icons.app}
        <MenuList>{MENU.map((m) => <MenuItem type="button" key={m}>{m}</MenuItem>)}</MenuList>
        <MdiButton type="button" aria-label="Свернуть">
          <svg width="10" height="10" viewBox="0 0 10 10" aria-hidden="true"><path d="M2 8h6" stroke="#8d939c" strokeWidth="2" /></svg>
        </MdiButton>
        <MdiButton type="button" aria-label="Восстановить">
          <svg width="10" height="10" viewBox="0 0 10 10" aria-hidden="true"><path d="M3 3V1.500h6v4H7M1.500 4.500h5v4h-5z" fill="none" stroke="#8d939c" strokeWidth="1.300" /></svg>
        </MdiButton>
        <MdiButton type="button" aria-label="Закрыть">
          <svg width="10" height="10" viewBox="0 0 10 10" aria-hidden="true"><path d="M2 2l6 6M8 2L2 8" stroke="#8d939c" strokeWidth="2" /></svg>
        </MdiButton>
      </MenuBar>
      <Toolbars />
      <Workspace>
        <MarketWatch />
        <Chart />
      </Workspace>
      <TerminalPanel />
      <StatusBar>
        <StatusCell>Для вызова справки нажмите F1</StatusCell>
        <StatusCell $w="135px">Default</StatusCell>
        <StatusCell $w="118px" />
        <StatusCell $w="82px" />
        <StatusCell $w="81px" />
        <StatusCell $w="77px" />
        <StatusCell $w="81px" />
        <StatusCell $w="77px" />
        <StatusCell $w="145px">{icons.traffic}43820/42 kb</StatusCell>
      </StatusBar>
      <OrderDialog />
    </Shell>
  );
}
